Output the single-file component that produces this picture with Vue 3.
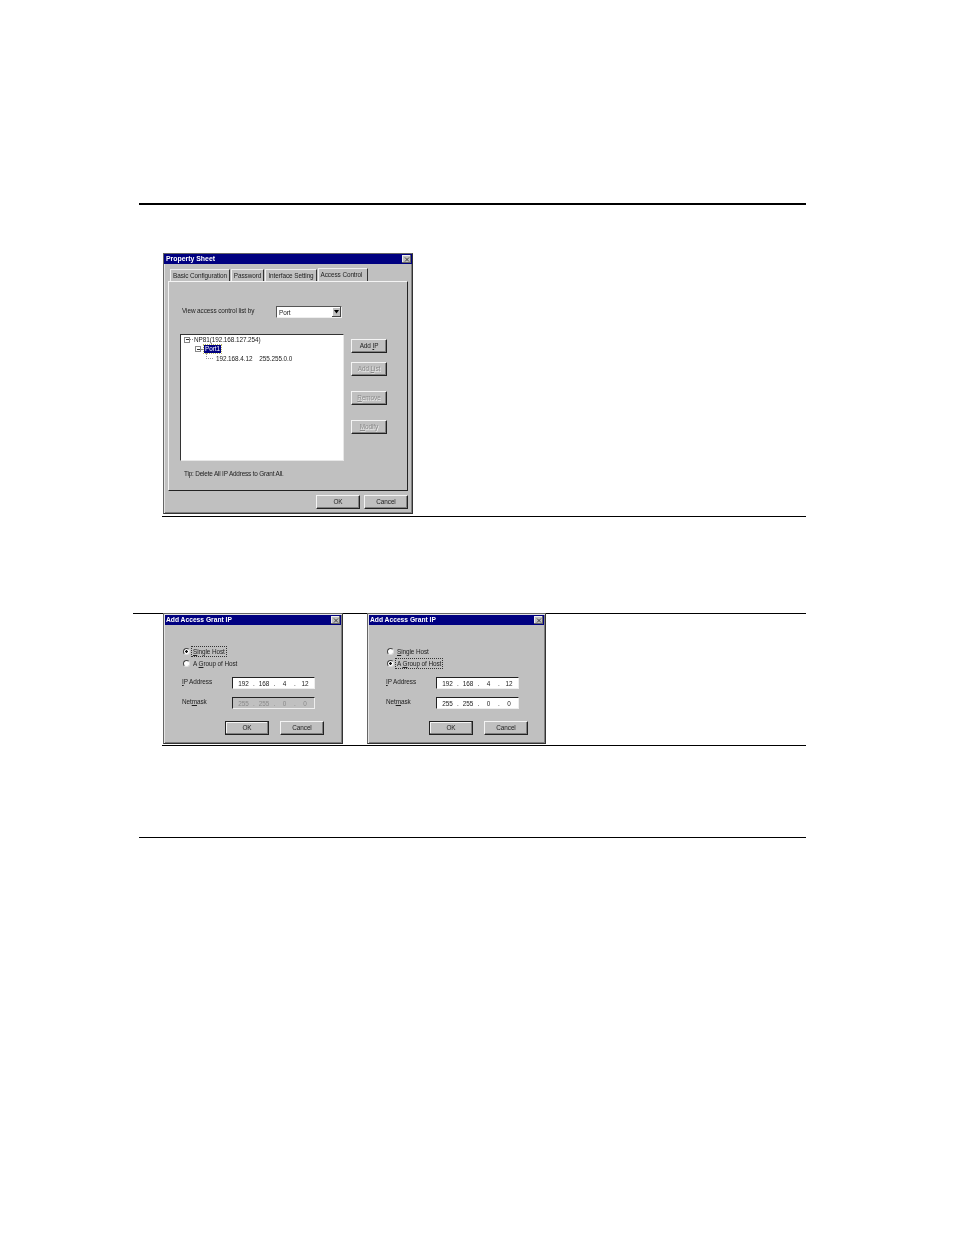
<script setup>
const tabs = [
  { label: 'Basic Configuration', w: 60 },
  { label: 'Password', w: 33 },
  { label: 'Interface Setting', w: 52 },
  { label: 'Access Control', w: 50, active: true }
]
const sideButtons = [
  { label: 'Add IP', key: 'I', pre: 'Add ', post: 'P' },
  { label: 'Add List', disabled: true, pre: 'Add ', key: 'L', post: 'ist' },
  { label: 'Remove', disabled: true, pre: '', key: 'R', post: 'emove' },
  { label: 'Modify', disabled: true, pre: '', key: 'M', post: 'odify' }
]
const grants = [
  { focus: 0, netmaskDisabled: true },
  { focus: 1, netmaskDisabled: false }
]
const ip = ['192', '168', '4', '12']
const mask = ['255', '255', '0', '0']
</script>

<template>
  <div class="page">
    <div class="rule thick"></div>

    <section class="win prop">
      <div class="title">
        <span>Property Sheet</span>
        <span class="close"><svg viewBox="0 0 8 7" width="8" height="7"><path d="M2 1.5 6 5.5M6 1.5 2 5.5" stroke="#333" stroke-width="0.9" fill="none"/></svg></span>
      </div>
      <div class="tabs">
        <div v-for="t in tabs" :key="t.label" class="tab" :class="{ active: t.active }" :style="{ width: t.w + 'px' }">{{ t.label }}</div>
      </div>
      <div class="panel">
        <div class="viewrow">
          <span class="viewlabel">View access control list by</span>
          <div class="select">
            <span class="selval">Port</span>
            <span class="drop"><svg viewBox="0 0 7 4" width="7" height="4"><path d="M1 0h5L3.5 3.5z" fill="#000"/></svg></span>
          </div>
        </div>
        <div class="mainrow">
          <div class="tree">
            <div class="node n0"><span class="box"></span><i class="dash"></i><span>NP81(192.168.127.254)</span></div>
            <div class="node n1"><span class="box"></span><i class="dash short"></i><span class="sel">Port1</span></div>
            <div class="node n2"><i class="elbow"></i><span>192.168.4.12</span><span class="maskval">255.255.0.0</span></div>
          </div>
          <div class="sidebtns">
            <div v-for="b in sideButtons" :key="b.label" class="btn side" :class="{ disabled: b.disabled }">{{ b.pre }}<u>{{ b.key }}</u>{{ b.post }}</div>
          </div>
        </div>
        <div class="tip">Tip: Delete All IP Address to Grant All.</div>
      </div>
      <div class="foot">
        <div class="btn ok">OK</div>
        <div class="btn ok">Cancel</div>
      </div>
    </section>

    <div class="rule r2"></div>
    <div class="rule r3"></div>

    <div class="grants">
      <section v-for="(g, i) in grants" :key="i" class="win grant">
        <div class="title">
          <span>Add Access Grant IP</span>
          <span class="close"><svg viewBox="0 0 8 7" width="8" height="7"><path d="M2 1.5 6 5.5M6 1.5 2 5.5" stroke="#333" stroke-width="0.9" fill="none"/></svg></span>
        </div>
        <div class="radio-row first">
          <span class="radio" :class="{ on: g.focus === 0 }"></span>
          <span class="rlabel" :class="{ focus: g.focus === 0 }"><u>S</u>ingle Host</span>
        </div>
        <div class="radio-row">
          <span class="radio" :class="{ on: g.focus === 1 }"></span>
          <span class="rlabel" :class="{ focus: g.focus === 1 }">A <u>G</u>roup of Host</span>
        </div>
        <div class="field ipfield">
          <span class="flabel"><u>I</u>P Address</span>
          <div class="ipbox">
            <template v-for="(o, j) in ip" :key="j">
              <span class="oct">{{ o }}</span><span v-if="j < 3" class="dot">.</span>
            </template>
          </div>
        </div>
        <div class="field maskfield">
          <span class="flabel">Net<u>m</u>ask</span>
          <div class="ipbox" :class="{ off: g.netmaskDisabled }">
            <template v-for="(o, j) in mask" :key="j">
              <span class="oct">{{ o }}</span><span v-if="j < 3" class="dot">.</span>
            </template>
          </div>
        </div>
        <div class="gfoot">
          <div class="btn ok strong">OK</div>
          <div class="btn ok">Cancel</div>
        </div>
      </section>
    </div>

    <div class="rule r4"></div>
    <div class="rule thin r5"></div>
  </div>
</template>

<style>
html, body { margin: 0; background: #fff; }
</style>

<style scoped>
.page {
  width: 954px;
  height: 1235px;
  overflow: hidden;
  padding-top: 203px;
  box-sizing: border-box;
  background: #fff;
  font-family: "Liberation Sans", Arial, sans-serif;
  font-size: 6.4px;
  letter-spacing: -0.08px;
  color: #222;
}
.rule { height: 1px; background: #000; margin-left: 162px; width: 644px; }
.thick { height: 2px; margin-left: 139px; width: 667px; }
.r2 { margin-top: 2px; }
.r3 { margin-top: 96px; margin-left: 133px; width: 673px; }
.r4 { margin-top: 1px; }
.r5 { margin-top: 91px; margin-left: 139px; width: 667px; }

.win {
  box-sizing: border-box;
  background: #c0c0c0;
  border: 1px solid;
  border-color: #666 #333 #333 #666;
  box-shadow: inset 1px 1px 0 #e4e4e4, inset -1px -1px 0 #808080;
}
.win > * { filter: blur(0.3px); }
.title {
  height: 10px;
  background: #000080;
  color: #fff;
  font-weight: 700;
  font-size: 6.9px;
  letter-spacing: 0;
  line-height: 10px;
  padding-left: 2px;
  display: flex;
  justify-content: space-between;
  align-items: center;
}
.close {
  width: 9px;
  height: 8px;
  margin-right: 1px;
  background: #c0c0c0;
  display: flex;
  align-items: center;
  justify-content: center;
  box-shadow: inset -1px -1px 0 #666, inset 1px 1px 0 #eee;
}

.prop { width: 250px; height: 261px; margin: 48px 0 0 163px; }
.tabs { display: flex; height: 17px; padding: 0 0 0 6px; align-items: flex-end; }
.tab {
  box-sizing: border-box;
  height: 12px;
  line-height: 11px;
  text-align: center;
  margin-right: 1px;
  border-top: 1px solid #f0f0f0;
  border-left: 1px solid #f0f0f0;
  border-right: 1px solid #333;
  white-space: nowrap;
}
.tab.active { height: 14px; line-height: 11px; position: relative; top: 1px; background: #c0c0c0; z-index: 1; padding-right: 3px; }
.panel {
  box-sizing: border-box;
  width: 240px;
  height: 210px;
  margin-left: 4px;
  border: 1px solid;
  border-color: #f4f4f4 #222 #222 #f4f4f4;
  padding: 24px 0 0 13px;
}
.viewrow { display: flex; align-items: center; height: 12px; }
.viewlabel { width: 94px; white-space: nowrap; margin-top: -3px; }
.select {
  box-sizing: border-box;
  width: 66px;
  height: 12px;
  background: #fff;
  border: 1px solid;
  border-color: #555 #eee #eee #555;
  display: flex;
  justify-content: space-between;
  align-items: center;
  padding-left: 2px;
}
.drop {
  width: 9px;
  height: 10px;
  background: #c0c0c0;
  display: flex;
  align-items: center;
  justify-content: center;
  box-shadow: inset -1px -1px 0 #444, inset 1px 1px 0 #fff;
}
.mainrow { display: flex; margin: 16px 0 0 -2px; }
.tree {
  box-sizing: border-box;
  width: 164px;
  height: 127px;
  background: #fff;
  border: 1px solid;
  border-color: #333 #e8e8e8 #e8e8e8 #333;
  padding: 0 0 0 3px;
}
.node { display: flex; align-items: center; height: 9.5px; white-space: nowrap; }
.n1 { padding-left: 11px; }
.n2 { padding-left: 22px; }
.box {
  box-sizing: border-box;
  width: 6px;
  height: 6px;
  border: 1px solid #888;
  position: relative;
  flex: none;
  background: linear-gradient(#333, #333) center / 3px 1px no-repeat;
}
.dash { width: 3px; border-top: 1px dotted #888; margin: 0 1px 0 0; flex: none; }
.dash.short { width: 2px; }
.elbow { width: 6px; height: 5px; margin: -5px 3px 0 0; border-left: 1px dotted #999; border-bottom: 1px dotted #999; flex: none; }
.sel {
  background: #000080;
  color: #fff;
  outline: 1px dotted #b8b860;
  padding: 0 1px;
  line-height: 8px;
  font-size: 6.4px;
}
.maskval { margin-left: 7px; }
.sidebtns { margin-left: 7px; padding-top: 5px; display: flex; flex-direction: column; }
.btn {
  box-sizing: border-box;
  height: 14px;
  line-height: 12px;
  text-align: center;
  background: #c0c0c0;
  border: 1px solid;
  border-color: #f4f4f4 #222 #222 #f4f4f4;
  box-shadow: inset -1px -1px 0 #808080;
}
.side { width: 36px; }
.side:nth-child(2) { margin-top: 9px; }
.side:nth-child(3) { margin-top: 15px; }
.side:nth-child(4) { margin-top: 15px; }
.disabled { color: #8a8a8a; text-shadow: 0.6px 0.6px 0 #eee; }
.tip { margin: 8px 0 0 2px; line-height: 10px; white-space: nowrap; letter-spacing: -0.18px; }
.foot { display: flex; justify-content: flex-end; gap: 4px; margin-top: 4px; padding-right: 4px; }
.ok { width: 44px; }
.strong { border-color: #222; box-shadow: inset -1px -1px 0 #808080, inset 1px 1px 0 #f4f4f4; }

.grants { display: flex; gap: 24px; margin: -1px 0 0 163px; position: relative; }
.grant { width: 180px; height: 131px; padding: 1px 1px 0; }
.grant:last-child { width: 179px; }
.grant .title { font-size: 6.7px; padding-left: 1px; }
.radio-row { display: flex; align-items: center; height: 12px; padding-left: 18px; white-space: nowrap; }
.radio-row.first { margin-top: 20px; }
.radio {
  box-sizing: border-box;
  width: 7px;
  height: 7px;
  border-radius: 50%;
  background: #fff;
  border: 1px solid;
  border-color: #444 #ddd #ddd #444;
  margin-right: 2px;
  flex: none;
}
.radio.on { background: radial-gradient(circle, #111 0 1.1px, #fff 1.5px); }
.rlabel { padding: 0 1px; line-height: 9px; }
.rlabel.focus { outline: 1px dotted #333; outline-offset: -0.5px; }
.field { display: flex; align-items: center; height: 12px; padding-left: 17px; }
.ipfield { margin-top: 8px; }
.maskfield { margin-top: 8px; }
.flabel { width: 50px; white-space: nowrap; margin-top: -3px; }
.ipbox {
  box-sizing: border-box;
  width: 83px;
  height: 12px;
  background: #fff;
  border: 1px solid;
  border-color: #222 #eee #eee #222;
  display: flex;
  align-items: center;
  padding-left: 3px;
}
.ipbox.off { background: #c0c0c0; color: #8a8a8a; }
.oct { width: 15px; text-align: center; }
.dot { width: 5.5px; text-align: center; }
.gfoot { display: flex; gap: 11px; margin: 12px 0 0 60px; }
</style>
